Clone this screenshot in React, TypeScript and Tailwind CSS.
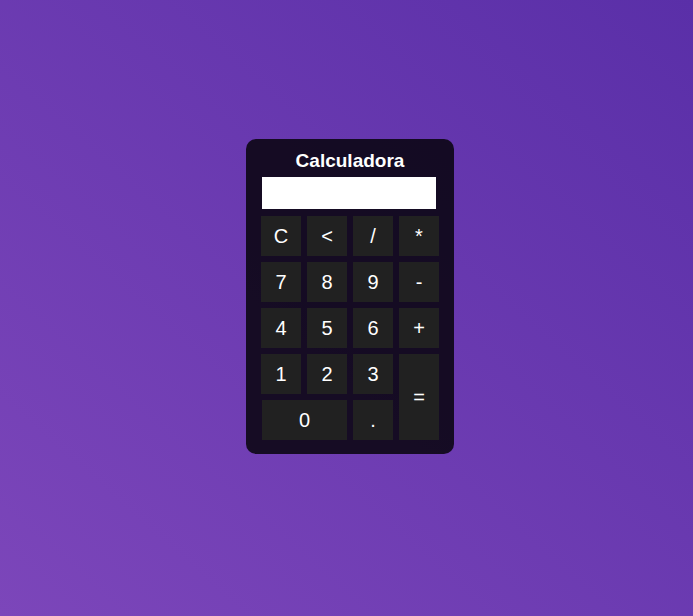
import React, { useState } from 'react';

const keys = [
  { label: 'C', cls: '' },
  { label: '<', cls: '' },
  { label: '/', cls: '' },
  { label: '*', cls: '' },
  { label: '7', cls: '' },
  { label: '8', cls: '' },
  { label: '9', cls: '' },
  { label: '-', cls: '' },
  { label: '4', cls: '' },
  { label: '5', cls: '' },
  { label: '6', cls: '' },
  { label: '+', cls: '' },
  { label: '1', cls: '' },
  { label: '2', cls: '' },
  { label: '3', cls: '' },
  { label: '=', cls: 'row-span-2 h-auto' },
  { label: '0', cls: 'col-span-2 w-auto ml-px' },
  { label: '.', cls: '' },
];

export default function App() {
  const [value, setValue] = useState('');

  const press = (k: string) => {
    if (k === 'C') return setValue('');
    if (k === '<') return setValue((v) => v.slice(0, -1));
    if (k === '=') {
      try {
        // eslint-disable-next-line no-new-func
        setValue(String(Function(`return (${value})`)()));
      } catch {
        setValue('Erro');
      }
      return;
    }
    setValue((v) => v + k);
  };

  return (
    <div
      className="min-h-screen flex items-center justify-center pb-[24px] pl-[7px] bg-[linear-gradient(to_top_right,#7c46ba,#5a2fa8)]"
      style={{ fontFamily: '"Liberation Sans", Arial, sans-serif' }}
    >
      <div className="w-[208px] rounded-[10px] bg-black/80 px-[15px] pt-[11px] pb-[14px]">
        <h1 className="text-center text-[19px] leading-[22px] font-bold text-white">Calculadora</h1>
        <input
          readOnly
          value={value}
          className="mt-[5px] ml-px block h-[32px] w-[174px] bg-white px-2 text-right text-xl text-black outline-none"
        />
        <div className="mt-[7px] grid grid-cols-[repeat(4,40px)] auto-rows-[40px] gap-[6px]">
          {keys.map((k) => (
            <button
              key={k.label}
              onClick={() => press(k.label)}
              className={`flex items-center justify-center bg-[#212121] text-xl text-white ${k.cls}`}
            >
              {k.label}
            </button>
          ))}
        </div>
      </div>
    </div>
  );
}
